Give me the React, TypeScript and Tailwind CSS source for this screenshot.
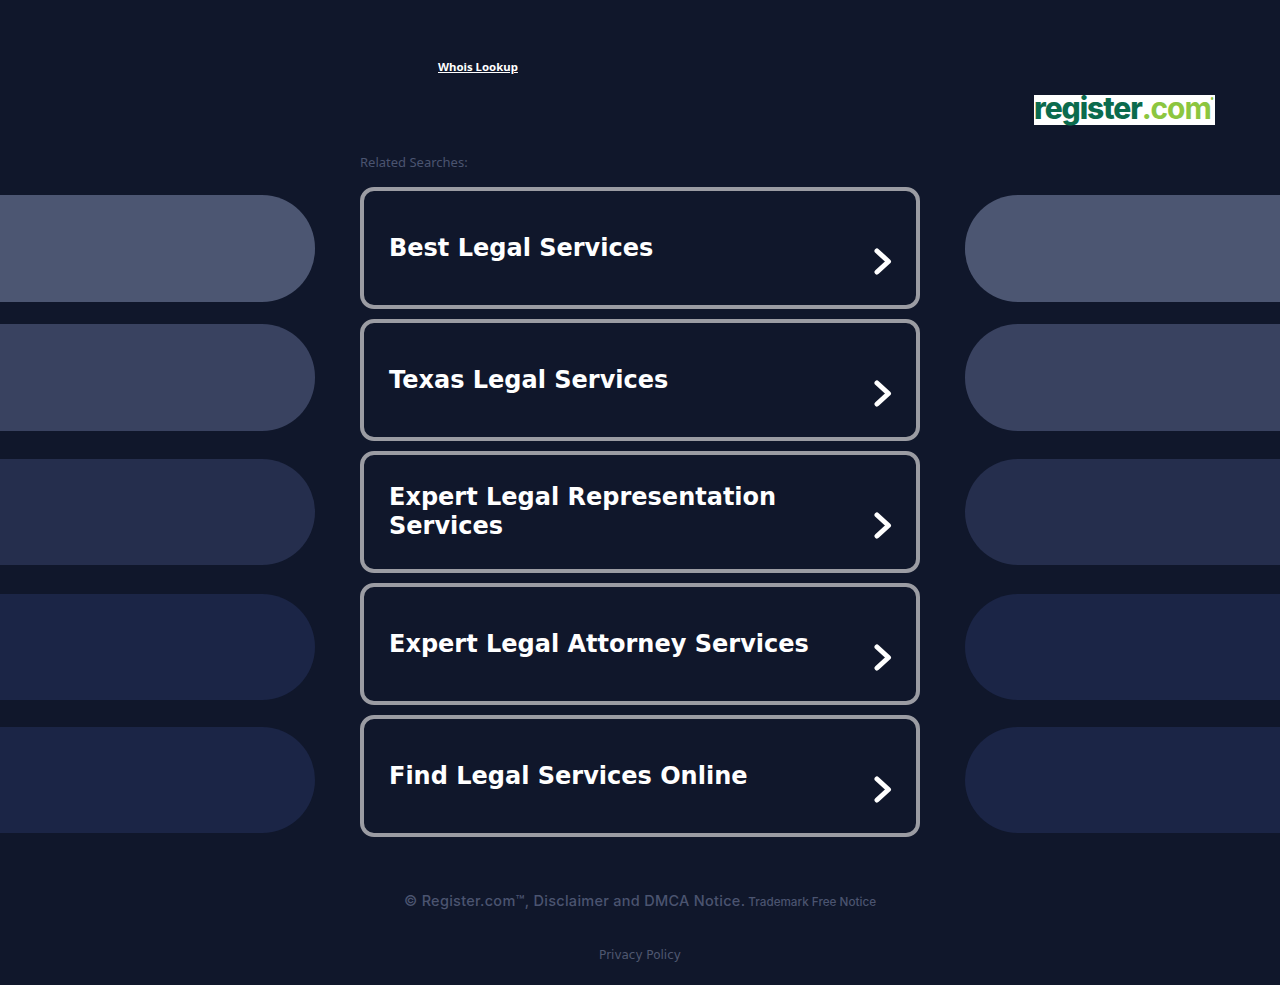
const searches = [
  "Best Legal Services",
  "Texas Legal Services",
  "Expert Legal Representation Services",
  "Expert Legal Attorney Services",
  "Find Legal Services Online",
];

const pills = [
  { bg: "bg-[#4c5672]", mt: "mt-[45px]", h: "h-[107px]" },
  { bg: "bg-[#394260]", mt: "mt-[22px]", h: "h-[107px]" },
  { bg: "bg-[#252e4d]", mt: "mt-[28px]", h: "h-[106px]" },
  { bg: "bg-[#1b2546]", mt: "mt-[29px]", h: "h-[106px]" },
  { bg: "bg-[#1b2546]", mt: "mt-[27px]", h: "h-[106px]" },
];

function Pills({ side }: { side: "left" | "right" }) {
  return (
    <div className="flex w-[315px] shrink-0 flex-col">
      {pills.map((p) => (
        <div
          key={p.bg + p.mt}
          className={`${p.bg} ${p.mt} ${p.h} ${side === "left" ? "rounded-r-[53px]" : "rounded-l-[53px]"}`}
        />
      ))}
    </div>
  );
}

function Chevron() {
  return (
    <svg viewBox="0 0 18 27" className="mt-[27px] h-[27px] w-[18px] shrink-0" fill="none">
      <path d="M3 3 L14.5 13.5 L3 24" stroke="#ffffff" strokeWidth="5" strokeLinecap="round" strokeLinejoin="round" />
    </svg>
  );
}

export default function App() {
  return (
    <div className="h-[985px] overflow-hidden bg-[#10172b] font-['DejaVu_Sans',sans-serif]">
      <header className="flex h-[150px] flex-col">
        <a href="#" className="ml-[438px] mt-[60px] self-start font-['Noto_Sans',sans-serif] text-[11.4px] font-bold leading-[14px] text-white underline">
          Whois Lookup
        </a>
        <div className="ml-[1034px] mt-[21px] flex h-[30px] w-[181px] items-start bg-white font-['Inter',sans-serif] text-[30px] font-extrabold leading-[26px] tracking-[-1.1px]">
          <span className="text-[#0b6b4d]">register</span>
          <span className="font-bold text-[#8cc63f]">.com</span>
          <span className="mt-[1px] text-[3px] leading-[6px] tracking-normal text-[#8cc63f]">●</span>
        </div>
      </header>
      <main className="flex justify-between">
        <Pills side="left" />
        <div className="flex w-[560px] shrink-0 flex-col">
          <p className="mt-[5px] h-[32px] font-['Noto_Sans',sans-serif] text-[13px] leading-[15px] text-[#4b5470]">Related Searches:</p>
          {searches.map((s) => (
            <a
              key={s}
              href="#"
              className="mb-[10px] flex h-[122px] items-center justify-between rounded-[14px] border-4 border-[#9b9ca3] bg-[#10172b] pl-[25px] pr-[24px] text-[24px] font-bold leading-[29px] text-white"
            >
              <span className="w-[470px]">{s}</span>
              <Chevron />
            </a>
          ))}
          <p className="mt-[45px] whitespace-nowrap text-center font-['Inter',sans-serif] text-[14.5px] font-medium leading-[18px] tracking-[0.28px] text-[#4b5470]">
            © Register.com™, Disclaimer and DMCA Notice.<span className="ml-[3px] text-[11.7px] tracking-normal">Trademark Free Notice</span>
          </p>
          <a href="#" className="mt-[37px] text-center text-[12px] leading-[14px] text-[#4f5770]">Privacy Policy</a>
        </div>
        <Pills side="right" />
      </main>
    </div>
  );
}
